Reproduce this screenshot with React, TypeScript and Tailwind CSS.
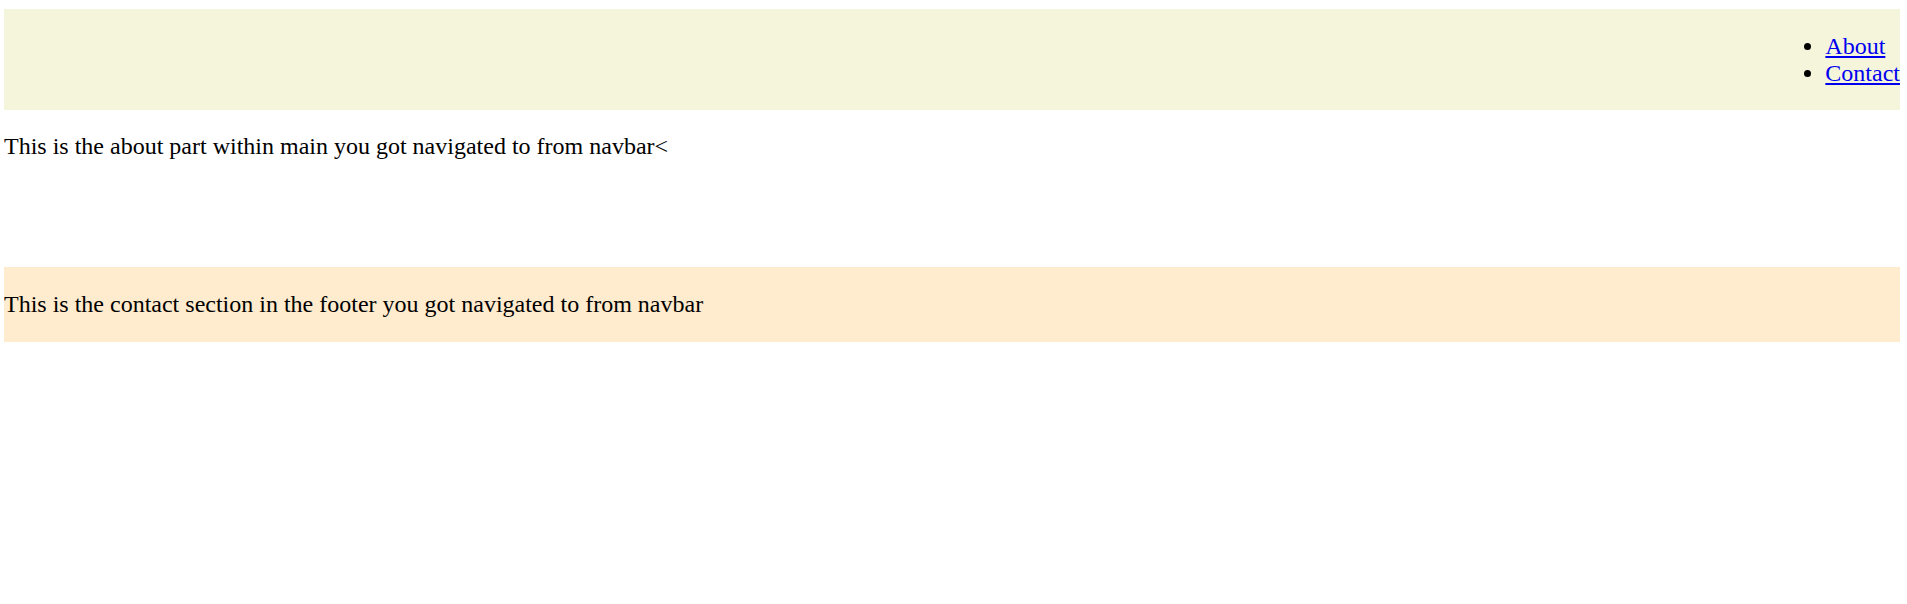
export default function App() {
  return (
    <div className="pt-[9px] pl-[4px] pr-[7px] font-['Liberation_Serif',serif] text-[24px] leading-[27px] text-black">
      <nav className="flex justify-end bg-[#f5f5dc] pt-[24px] pb-[23px]">
        <ul className="list-disc">
          <li>
            <a href="#about" className="text-[#0000ee] underline">
              About
            </a>
          </li>
          <li>
            <a href="#contact" className="text-[#0000ee] underline">
              Contact
            </a>
          </li>
        </ul>
      </nav>
      <main id="about" className="mt-[23px]">
        <p>This is the about part within main you got navigated to from navbar&lt;</p>
      </main>
      <footer id="contact" className="mt-[107px] bg-[#ffebcd] py-[24px]">
        <p>This is the contact section in the footer you got navigated to from navbar</p>
      </footer>
    </div>
  )
}
